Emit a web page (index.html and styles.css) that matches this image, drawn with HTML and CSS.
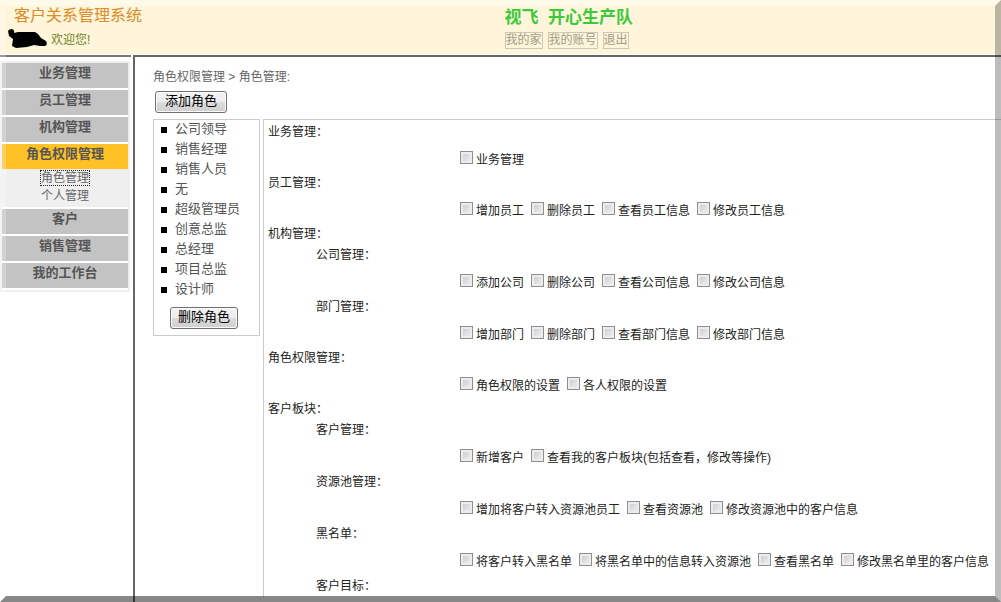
FILE: index.html
```html
<!DOCTYPE html>
<html lang="zh-CN">
<head>
<meta charset="utf-8">
<title>客户关系管理系统</title>
<link rel="stylesheet" href="styles.css">
</head>
<body>
<header class="top">
  <div class="top-left">
    <h1 class="title">客户关系管理系统</h1>
    <p class="welcome">
      <svg class="blob" width="39" height="19" viewBox="0 0 39 19" aria-hidden="true"><path d="M0 2Q1 0 4 0Q7 1 6 4L10 3H27L30 5L33 9L38 12Q40 16 37 17H32L26 16L19 18L8 19L4 17L5 10L1 7Z"/></svg>
      <span>欢迎您!</span>
    </p>
  </div>
  <div class="top-mid">
    <p class="brand">视飞&nbsp;&nbsp;开心生产队</p>
    <nav class="links"><a href="#">我的家</a><a href="#">我的账号</a><a href="#">退出</a></nav>
  </div>
</header>
<div class="frames">
  <aside class="side">
    <nav class="menu">
      <a class="item" href="#">业务管理</a>
      <a class="item" href="#">员工管理</a>
      <a class="item" href="#">机构管理</a>
      <div class="open">
        <a class="item active" href="#">角色权限管理</a>
        <div class="sub"><a class="current" href="#">角色管理</a><a href="#">个人管理</a></div>
      </div>
      <a class="item" href="#">客户</a>
      <a class="item" href="#">销售管理</a>
      <a class="item" href="#">我的工作台</a>
    </nav>
  </aside>
  <main class="main">
    <p class="crumb">角色权限管理 &gt; 角色管理:</p>
    <button class="btn add" type="button">添加角色</button>
    <div class="cols">
      <section class="roles">
        <ul>
          <li><a href="#">公司领导</a></li>
          <li><a href="#">销售经理</a></li>
          <li><a href="#">销售人员</a></li>
          <li><a href="#">无</a></li>
          <li><a href="#">超级管理员</a></li>
          <li><a href="#">创意总监</a></li>
          <li><a href="#">总经理</a></li>
          <li><a href="#">项目总监</a></li>
          <li><a href="#">设计师</a></li>
        </ul>
        <button class="btn" type="button">删除角色</button>
      </section>
      <form class="perms">
        <h2>业务管理：</h2>
        <div class="checks"><label><input type="checkbox"><span>业务管理</span></label></div>
        <h2>员工管理：</h2>
        <div class="checks"><label><input type="checkbox"><span>增加员工</span></label><label><input type="checkbox"><span>删除员工</span></label><label><input type="checkbox"><span>查看员工信息</span></label><label><input type="checkbox"><span>修改员工信息</span></label></div>
        <h2>机构管理：</h2>
        <section class="group">
          <h3>公司管理：</h3>
          <div class="checks"><label><input type="checkbox"><span>添加公司</span></label><label><input type="checkbox"><span>删除公司</span></label><label><input type="checkbox"><span>查看公司信息</span></label><label><input type="checkbox"><span>修改公司信息</span></label></div>
        </section>
        <section class="group">
          <h3>部门管理：</h3>
          <div class="checks"><label><input type="checkbox"><span>增加部门</span></label><label><input type="checkbox"><span>删除部门</span></label><label><input type="checkbox"><span>查看部门信息</span></label><label><input type="checkbox"><span>修改部门信息</span></label></div>
        </section>
        <h2>角色权限管理：</h2>
        <div class="checks"><label><input type="checkbox"><span>角色权限的设置</span></label><label><input type="checkbox"><span>各人权限的设置</span></label></div>
        <h2>客户板块：</h2>
        <section class="group">
          <h3>客户管理：</h3>
          <div class="checks"><label><input type="checkbox"><span>新增客户</span></label><label><input type="checkbox"><span>查看我的客户板块(包括查看，修改等操作)</span></label></div>
        </section>
        <section class="group">
          <h3>资源池管理：</h3>
          <div class="checks"><label><input type="checkbox"><span>增加将客户转入资源池员工</span></label><label><input type="checkbox"><span>查看资源池</span></label><label><input type="checkbox"><span>修改资源池中的客户信息</span></label></div>
        </section>
        <section class="group">
          <h3>黑名单：</h3>
          <div class="checks"><label><input type="checkbox"><span>将客户转入黑名单</span></label><label><input type="checkbox"><span>将黑名单中的信息转入资源池</span></label><label><input type="checkbox"><span>查看黑名单</span></label><label><input type="checkbox"><span>修改黑名单里的客户信息</span></label></div>
        </section>
        <section class="group">
          <h3>客户目标：</h3>
        </section>
      </form>
    </div>
  </main>
</div>
<div class="bevel"></div>
</body>
</html>
```
FILE: styles.css
```css
* { box-sizing: border-box; }
body {
  margin: 0;
  height: 100vh;
  display: flex;
  flex-direction: column;
  overflow: hidden;
  background: #fff;
  color: #222;
  font: 12px/16px "Liberation Sans", "Noto Sans CJK SC", sans-serif;
}
h1, h2, h3, p, ul { margin: 0; padding: 0; font-weight: normal; }
a { color: inherit; text-decoration: none; }

.top {
  flex: none;
  display: grid;
  grid-template-columns: 1fr 1fr;
  padding-top: 6px;
  height: 54px;
  background: #fef5da;
}
.top-left { padding-left: 8px; }
.title { padding-left: 6px; font-size: 16px; line-height: 20px; color: #dc8c28; }
.welcome { display: flex; gap: 4px; padding-top: 3px; line-height: 22px; color: #6f8427; }
.blob { display: block; }
.top-mid { padding-left: 4px; }
.brand { font-size: 17px; line-height: 24px; font-weight: bold; color: #3cc93c; }
.links { display: flex; gap: 5px; padding-top: 2px; color: #a29b88; }
.links a { border: 1px solid #cdc7b6; line-height: 15px; }

.frames { flex: 1; min-height: 0; display: flex; gap: 2px; }
.side { flex: none; width: 131px; border-top: 2px solid #777; padding-top: 4px; margin-top: 1px; }
.menu {
  display: flex;
  flex-direction: column;
  gap: 2px;
  border: 2px solid #efefef;
  padding-bottom: 2px;
  width: 130px;
  text-align: center;
}
.item { display: block; background: #c3c3c3; color: #555; font-size: 13px; font-weight: bold; line-height: 20px; padding-bottom: 5px; }
.active { background: #ffc125; }
.sub { display: flex; flex-direction: column; align-items: center; gap: 4px; padding: 2px 0 4px; background: #efefef; color: #666; line-height: 14px; }
.current { outline: 1px dotted #222; }

.main {
  flex: 1;
  min-width: 0;
  overflow: hidden;
  margin-top: 1px;
  border-top: 2px solid #666;
  border-left: 2px solid #666;
  padding: 12px 0 0 18px;
}
.crumb { color: #666; }
.btn {
  display: block;
  height: 22px;
  padding: 0 8px 2px;
  border: 1px solid #707070;
  border-radius: 3px;
  background: linear-gradient(#f3f3f3 0%, #ececec 50%, #dcdcdc 51%, #cfcfcf 100%);
  box-shadow: inset 0 0 0 1px #fbfbfb;
  color: #000;
  font: 13px/18px "Liberation Sans", "Noto Sans CJK SC", sans-serif;
}
.add { margin: 6px 0 6px 2px; padding: 0 9px 2px; }
.cols { display: flex; align-items: flex-start; gap: 3px; }
.roles { flex: none; width: 107px; border: 1px solid #ccc; padding-bottom: 6px; }
.roles ul { list-style: none; }
.roles li { display: flex; align-items: center; gap: 8px; height: 20px; padding-left: 7px; line-height: 18px; font-size: 13px; color: #555; }
.roles li a { padding-bottom: 2px; }
.roles li::before { content: ""; width: 6px; height: 6px; background: #000; }
.roles .btn { margin: 7px auto 0 16px; padding: 0 7px 2px; }

.perms { flex: 1; min-width: 0; border: solid #ccc; border-width: 1px 0 0 1px; padding: 2px 0 0 4px; white-space: nowrap; }
.perms h2, .perms h3 { font-size: 12px; line-height: 21px; }
.perms h3 { padding-left: 48px; }
.group + .group { margin-top: 1px; }
.checks { display: flex; gap: 7px; height: 30px; padding: 8px 0 0 192px; }
.checks label { display: flex; gap: 3px; line-height: 18px; }
.checks input {
  appearance: none;
  flex: none;
  width: 13px;
  height: 13px;
  margin: 0;
  border: 1px solid #8e8f8f;
  background: linear-gradient(135deg, #c4c8ce, #f4f4f4);
  box-shadow: inset 0 0 0 2px #ececec;
}
.checks input:checked { background: #456; }

.bevel {
  position: fixed;
  inset: 0;
  pointer-events: none;
  border: 6px solid;
  border-color: rgba(255,255,255,.4) rgba(0,0,0,.26) rgba(0,0,0,.47) rgba(255,255,255,.25);
}
```
